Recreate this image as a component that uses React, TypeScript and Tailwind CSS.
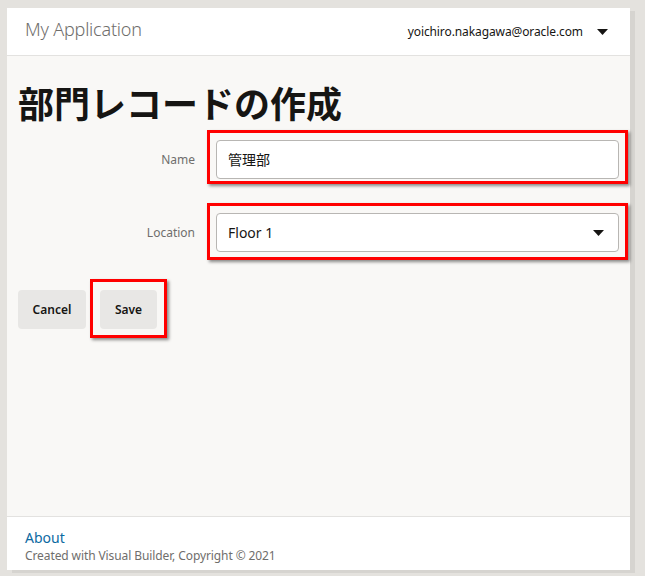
import React from "react";

function Caret() {
  return (
    <svg width="11" height="6" viewBox="0 0 11 6" className="block">
      <path d="M0 0 L11 0 L5.5 6 Z" fill="#161513" />
    </svg>
  );
}

function RedMark({ className }: { className: string }) {
  return (
    <div
      className={`pointer-events-none absolute border-[3px] border-[#ff0000] shadow-[2px_2px_3px_rgba(0,0,0,0.45)] ${className}`}
    />
  );
}

export default function App() {
  const font = { fontFamily: '"Noto Sans", "Noto Sans CJK JP", sans-serif' };
  return (
    <div
      className="min-h-[576px] w-[645px] bg-[#e4e2de] pl-[7px] pt-[8px]"
      style={font}
    >
      <div className="flex h-[562px] w-[623px] flex-col bg-white shadow-[5px_3px_0_#d6d4d0]">
        <header className="flex h-[48px] shrink-0 items-center justify-between border-b border-[#e3e2e0] pl-[18px] pr-[22px]">
          <span className="mb-[4px] text-[18px] font-light tracking-[-0.2px] text-[#6f6e6c]">My Application</span>
          <div className="flex items-center gap-[14px]">
            <span className="text-[12px] tracking-[-0.1px] text-[#161513]">yoichiro.nakagawa@oracle.com</span>
            <Caret />
          </div>
        </header>
        <main className="flex-1 bg-[#f9f8f6] px-[11px] pt-[25px]">
          <h1
            className="text-[36px] font-bold leading-[1.2] text-[#161513]"
            style={{ fontFamily: '"Noto Sans CJK JP", sans-serif' }}
          >
            部門レコードの作成
          </h1>
          <div className="mt-[16px] flex flex-col gap-[34px]">
            <div className="flex items-center">
              <label className="w-[188px] pr-[11px] text-right text-[12px] text-[#6f6e6c]">Name</label>
              <div className="relative ml-[10px] w-[403px]">
                <div className="flex h-[39px] items-center rounded-[4px] border border-[#b8b6b3] bg-white px-[11px] text-[14px] text-[#161513]" style={{ fontFamily: '"Noto Sans CJK JP", sans-serif' }}>
                  管理部
                </div>
                <RedMark className="-left-[9px] -right-[9px] -top-[10px] -bottom-[5px]" />
              </div>
            </div>
            <div className="flex items-center">
              <label className="w-[188px] pr-[11px] text-right text-[12px] text-[#6f6e6c]">Location</label>
              <div className="relative ml-[10px] w-[403px]">
                <div className="flex h-[39px] items-center justify-between rounded-[4px] border border-[#b8b6b3] bg-white pl-[11px] pr-[14px] text-[14px] text-[#161513]">
                  <span>Floor 1</span>
                  <Caret />
                </div>
                <RedMark className="-left-[9px] -right-[9px] -top-[10px] -bottom-[8px]" />
              </div>
            </div>
          </div>
          <div className="mt-[38px] flex gap-[14px]">
            <button className="h-[39px] w-[68px] rounded-[4px] bg-[#e8e7e5] text-[12px] font-semibold text-[#161513]">
              Cancel
            </button>
            <div className="relative">
              <button className="h-[39px] w-[57px] rounded-[4px] bg-[#e8e7e5] text-[12px] font-semibold text-[#161513]">
                Save
              </button>
              <RedMark className="-left-[10px] -right-[10px] -top-[11px] -bottom-[9px]" />
            </div>
          </div>
        </main>
        <footer className="h-[54px] shrink-0 border-t border-[#e3e2e0] pl-[18px] pt-[12px]">
          <div className="text-[14px] leading-[18px] text-[#0b6aa2]">About</div>
          <div className="mt-[1px] text-[12px] leading-[16px] tracking-[-0.1px] text-[#6f6e6c]">
            Created with Visual Builder, Copyright © 2021
          </div>
        </footer>
      </div>
    </div>
  );
}
